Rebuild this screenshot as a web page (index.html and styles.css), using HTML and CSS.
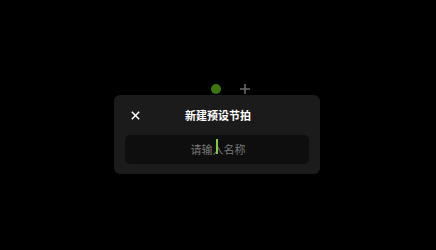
FILE: index.html
```html
<!DOCTYPE html>
<html lang="zh-CN">
<head>
    <meta charset="UTF-8">
    <meta name="viewport" content="width=device-width, initial-scale=1.0">
    <title>新建预设节拍</title>
    <link rel="stylesheet" href="styles.css">
</head>
<body>
    <div class="stage">
        <div class="toolbar">
            <span class="beat-dot"></span>
            <span class="add-btn">
                <svg width="10" height="10" viewBox="0 0 10 10">
                    <path d="M5 0V10M0 5H10" stroke="#6a6a6a" stroke-width="1.6"/>
                </svg>
            </span>
        </div>

        <div class="modal">
            <div class="modal-header">
                <span class="close-btn">
                    <svg width="9" height="9" viewBox="0 0 9 9">
                        <path d="M0.8 0.8L8.2 8.2M8.2 0.8L0.8 8.2" stroke="#ffffff" stroke-width="1.5"/>
                    </svg>
                </span>
                <h2>新建预设节拍</h2>
            </div>
            <div class="name-field">
                <input type="text" class="name-input" placeholder="请输入名称">
                <span class="caret"></span>
            </div>
        </div>
    </div>
</body>
</html>
```

FILE: styles.css
```css
html, body {
    margin: 0;
    height: 100%;
    background: #000000;
}

body {
    font-family: "Noto Sans CJK SC", "Noto Sans", sans-serif;
}

.stage {
    display: flex;
    flex-direction: column;
    align-items: flex-start;
    padding: 84px 0 0 114px;
}

.toolbar {
    display: flex;
    align-items: center;
    gap: 19px;
    padding-left: 97px;
    height: 10px;
    margin-bottom: 1px;
}

.beat-dot {
    width: 10px;
    height: 10px;
    border-radius: 50%;
    background: #3e760f;
}

.add-btn {
    display: flex;
    width: 10px;
    height: 10px;
}

.modal {
    width: 206px;
    height: 79px;
    box-sizing: border-box;
    padding: 0 11px;
    background: #1b1b1b;
    border-radius: 6px;
}

.modal-header {
    position: relative;
    height: 40px;
    display: flex;
    align-items: center;
    justify-content: center;
}

.modal-header h2 {
    margin: 0;
    font-size: 11px;
    font-weight: 700;
    color: #ffffff;
    line-height: 1;
    padding-left: 2px;
}

.close-btn {
    position: absolute;
    left: 6px;
    top: 16px;
    display: flex;
}

.name-field {
    position: relative;
    height: 29px;
}

.name-input {
    width: 100%;
    height: 29px;
    box-sizing: border-box;
    border: none;
    outline: none;
    border-radius: 5px;
    background: #0e0e0e;
    color: #ffffff;
    font-family: inherit;
    font-size: 11px;
    text-align: center;
    padding: 0 0 1px 2px;
    caret-color: transparent;
}

.name-input::placeholder {
    color: #787878;
}

.caret {
    position: absolute;
    left: 91px;
    top: 4px;
    width: 1.5px;
    height: 15px;
    background: #86c83d;
}
```
